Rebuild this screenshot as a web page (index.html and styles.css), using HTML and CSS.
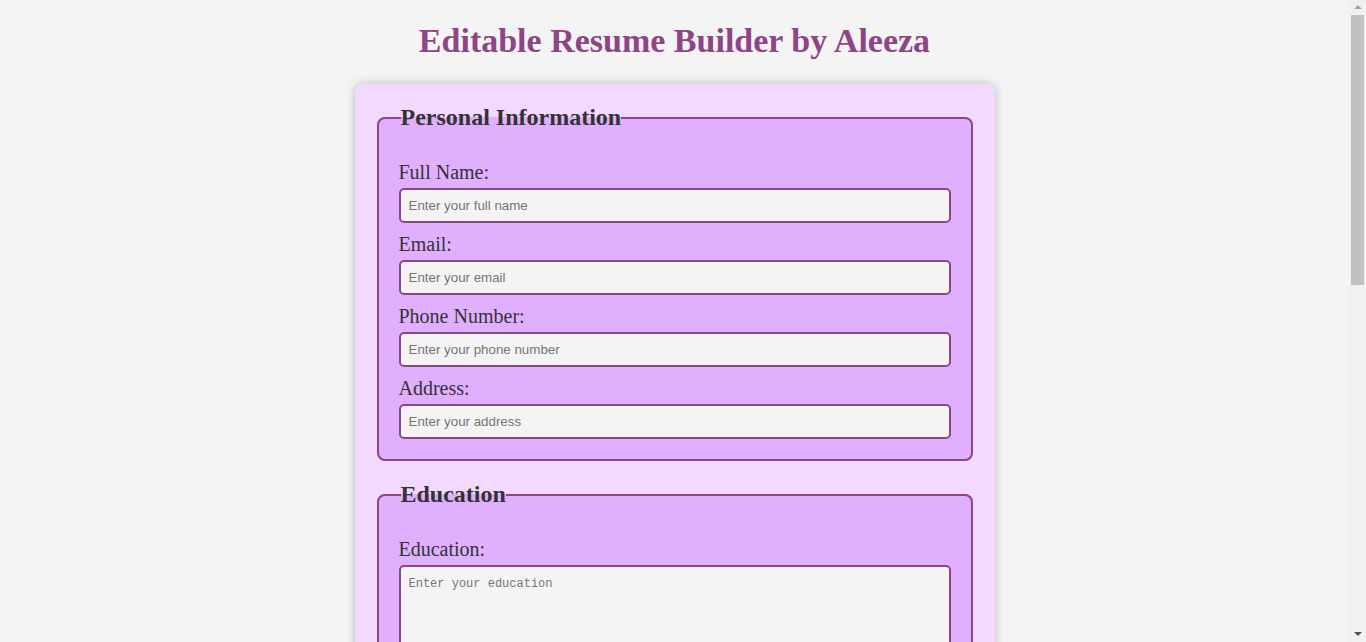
FILE: index.html
```html
<!DOCTYPE html>
<html lang="en">
<head>
<meta charset="UTF-8">
<title>Editable Resume Builder</title>
<link rel="stylesheet" href="styles.css">
</head>
<body>
<h1 class="title">Editable Resume Builder by Aleeza</h1>
<div class="container">
  <form class="resume-form">
    <fieldset class="section">
      <legend class="section-title">Personal Information</legend>
      <label class="field-label" for="name">Full Name:</label>
      <input class="field-input" id="name" type="text" placeholder="Enter your full name">
      <label class="field-label" for="email">Email:</label>
      <input class="field-input" id="email" type="email" placeholder="Enter your email">
      <label class="field-label" for="phone">Phone Number:</label>
      <input class="field-input" id="phone" type="tel" placeholder="Enter your phone number">
      <label class="field-label" for="address">Address:</label>
      <input class="field-input" id="address" type="text" placeholder="Enter your address">
    </fieldset>
    <fieldset class="section">
      <legend class="section-title">Education</legend>
      <label class="field-label" for="education">Education:</label>
      <textarea class="field-input field-area" id="education" placeholder="Enter your education"></textarea>
    </fieldset>
    <fieldset class="section">
      <legend class="section-title">Work Experience</legend>
      <label class="field-label" for="work">Work Experience:</label>
      <textarea class="field-input field-area" id="work" placeholder="Enter your work experience"></textarea>
    </fieldset>
  </form>
</div>
<div class="scrollbar" aria-hidden="true">
  <span class="scroll-arrow scroll-up"></span>
  <span class="scroll-thumb"></span>
  <span class="scroll-arrow scroll-down"></span>
</div>
</body>
</html>
```
FILE: styles.css
```css
html, body {
  margin: 0;
  padding: 0;
}
body {
  background: #f4f4f4;
  font-family: "Liberation Serif", "Times New Roman", serif;
  color: #333;
  padding: 20px 17px 20px 0;
}
.title {
  text-align: center;
  color: #8e4585;
  font-size: 34px;
  margin: 0 0 22px;
  line-height: 42px;
}
.container {
  width: 600px;
  margin: 0 auto;
  padding: 20px;
  background: #f3d9ff;
  border-radius: 8px;
  box-shadow: 0 0 10px rgba(0, 0, 0, 0.25);
}
.resume-form {
  display: flex;
  flex-direction: column;
  gap: 20px;
}
.section {
  margin: 0 2px;
  padding: 30px 20px 10px;
  border: 2px solid #8e4585;
  border-radius: 8px;
  background: #e0b0ff;
}
.section-title {
  font-size: 24px;
  font-weight: bold;
  padding: 0;
  margin-left: 2px;
  color: #333;
}
.field-label {
  display: block;
  font-size: 20px;
  line-height: 23px;
  margin-bottom: 4px;
}
.field-input {
  display: block;
  box-sizing: border-box;
  width: 100%;
  height: 35px;
  margin: 0 0 10px;
  padding: 8px;
  border: 2px solid #8e4585;
  border-radius: 5px;
  background: #f4f4f4;
  font-family: "Liberation Sans", Arial, sans-serif;
  font-size: 13.33px;
  color: #333;
}
.field-input::placeholder {
  color: #757575;
}
.field-area {
  height: 100px;
  padding-top: 10px;
  font-family: "Liberation Mono", "DejaVu Sans Mono", monospace;
  font-size: 12px;
}
.scrollbar {
  position: fixed;
  top: 0;
  right: 0;
  bottom: 0;
  width: 17px;
  background: #f1f1f1;
  display: flex;
  flex-direction: column;
  align-items: center;
}
.scroll-arrow {
  width: 0;
  height: 0;
  border-left: 4px solid transparent;
  border-right: 4px solid transparent;
  margin: 5px 0 6px;
}
.scroll-up {
  border-bottom: 4px solid #a3a3a3;
}
.scroll-down {
  margin-top: auto;
  border-top: 4px solid #505050;
}
.scroll-thumb {
  width: 13px;
  height: 270px;
  background: #c1c1c1;
}
```
